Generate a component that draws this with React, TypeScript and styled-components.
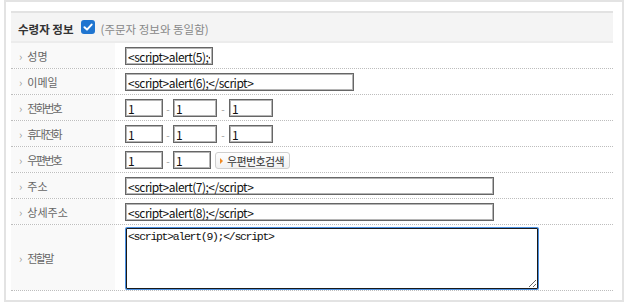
import * as React from 'react'
import styled, { createGlobalStyle } from 'styled-components'

const GlobalStyle = createGlobalStyle`
  html, body {
    margin: 0;
    padding: 0;
    background: #fff;
  }
  body {
    font-family: "Noto Sans CJK KR", "Noto Sans", sans-serif;
  }
`

const Frame = styled.div`
  box-sizing: border-box;
  width: 620px;
  height: 302px;
  margin-left: 4px;
  border: 2px solid #e3e3e3;
  padding: 9px 9px 9px 5px;
`

const Header = styled.div`
  display: flex;
  align-items: center;
  height: 28px;
  padding-left: 7px;
  background: #f4f4f4;
  border-top: 2px solid #e2e2e2;
  border-bottom: 2px solid #ececec;
  font-family: "Noto Sans CJK KR", sans-serif;
`

const Title = styled.span`
  font-size: 11.5px;
  font-weight: bold;
  color: #333;
  margin-top: 3px;
`

const Check = styled.span`
  display: inline-flex;
  align-items: center;
  justify-content: center;
  width: 14px;
  height: 14px;
  margin-left: 7px;
  margin-top: -1px;
  border-radius: 3px;
  background: #1f75d0;
`

const Note = styled.span`
  margin-left: 6px;
  margin-top: 3px;
  font-size: 11.5px;
  color: #888;
`

const Row = styled.div<{ tall?: boolean }>`
  display: grid;
  grid-template-columns: 104px 1fr;
  height: ${p => (p.tall ? 65 : 25)}px;
  border-bottom: 1px dotted #bdbdbd;
`

const Label = styled.div<{ wide?: boolean }>`
  display: flex;
  align-items: center;
  padding-left: 8px;
  background: #f9f9f9;
  font-size: 11px;
  color: #666;
  letter-spacing: ${p => (p.wide ? 0 : -1.7)}px;

  &::before {
    content: '›';
    color: #999;
    font-size: 11px;
    letter-spacing: 0;
    margin-right: 5px;
  }
`

const Value = styled.div<{ top?: boolean }>`
  display: flex;
  align-items: ${p => (p.top ? 'flex-start' : 'center')};
  padding: ${p => (p.top ? '2px 0 0 10px' : '1px 0 0 10px')};
`

const Field = styled.input<{ w: number }>`
  box-sizing: border-box;
  width: ${p => p.w}px;
  height: 18px;
  margin: 0;
  padding: 0 2px;
  border: 1px solid #666;
  box-shadow: inset 0 0 0 1px #b5b5b5;
  font-family: "Noto Sans CJK KR", "Noto Sans", sans-serif;
  font-size: 12px;
  letter-spacing: -0.5px;
  color: #111;
  background: #fff;
  outline: none;
`

const Dash = styled.span<{ w: number }>`
  width: ${p => p.w}px;
  text-align: center;
  font-size: 10px;
  color: #999;
`

const SearchButton = styled.button`
  display: inline-flex;
  align-items: center;
  box-sizing: border-box;
  height: 17px;
  width: 75px;
  margin: 1px 0 0 4px;
  padding: 0 0 0 4px;
  border: 1px solid #cfcfcf;
  border-radius: 3px;
  background: linear-gradient(#ffffff, #f1f1f1);
  font-family: "Noto Sans CJK KR", sans-serif;
  font-size: 11px;
  letter-spacing: -0.6px;
  color: #333;

  &::before {
    content: '';
    width: 0;
    height: 0;
    border-top: 3px solid transparent;
    border-bottom: 3px solid transparent;
    border-left: 3px solid #f08a24;
    margin-right: 4px;
  }
`

const Memo = styled.textarea`
  box-sizing: border-box;
  width: 412px;
  height: 61px;
  margin: 1px 0 0 1px;
  padding: 1px 1px;
  border: 1px solid #1a1a1a;
  border-radius: 1px;
  box-shadow: 0 0 0 1px #4a8fe0;
  font-family: "Liberation Mono", monospace;
  font-size: 11.5px;
  letter-spacing: -1.3px;
  color: #111;
  outline: none;
`

const Tick = () => (
  <svg width="10" height="10" viewBox="0 0 10 10">
    <path d="M1.5 5.2 L4 7.6 L8.6 2.6" fill="none" stroke="#fff" strokeWidth="2" strokeLinecap="round" strokeLinejoin="round" />
  </svg>
)

const App = () => (
  <>
    <GlobalStyle />
    <Frame>
      <Header>
        <Title>수령자 정보</Title>
        <Check><Tick /></Check>
        <Note>(주문자 정보와 동일함)</Note>
      </Header>
      <Row>
        <Label wide>성명</Label>
        <Value><Field w={88} defaultValue="<script>alert(5);</script>" /></Value>
      </Row>
      <Row>
        <Label wide>이메일</Label>
        <Value><Field w={229} defaultValue="<script>alert(6);</script>" /></Value>
      </Row>
      <Row>
        <Label>전화번호</Label>
        <Value>
          <Field w={38} defaultValue="1" />
          <Dash w={10}>-</Dash>
          <Field w={44} defaultValue="1" />
          <Dash w={12}>-</Dash>
          <Field w={44} defaultValue="1" />
        </Value>
      </Row>
      <Row>
        <Label>휴대전화</Label>
        <Value>
          <Field w={38} defaultValue="1" />
          <Dash w={10}>-</Dash>
          <Field w={44} defaultValue="1" />
          <Dash w={12}>-</Dash>
          <Field w={44} defaultValue="1" />
        </Value>
      </Row>
      <Row>
        <Label>우편번호</Label>
        <Value>
          <Field w={38} defaultValue="1" />
          <Dash w={10}>-</Dash>
          <Field w={38} defaultValue="1" />
          <SearchButton type="button">우편번호검색</SearchButton>
        </Value>
      </Row>
      <Row>
        <Label wide>주소</Label>
        <Value><Field w={369} defaultValue="<script>alert(7);</script>" /></Value>
      </Row>
      <Row>
        <Label wide>상세주소</Label>
        <Value><Field w={369} defaultValue="<script>alert(8);</script>" /></Value>
      </Row>
      <Row tall>
        <Label>전할말</Label>
        <Value top><Memo defaultValue="<script>alert(9);</script>" /></Value>
      </Row>
    </Frame>
  </>
)

export default App
